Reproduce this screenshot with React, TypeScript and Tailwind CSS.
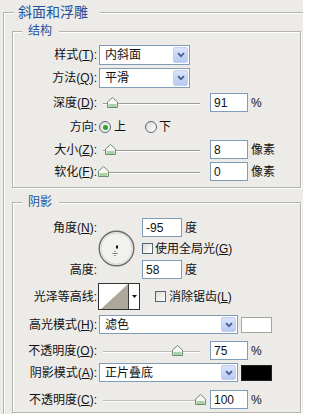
import React from "react";

// 标签列宽度：标签右对齐，冒号落在 x≈97
const LABEL = "w-[84px] shrink-0 text-right leading-none whitespace-nowrap";
const FIELD = "border border-[#7f9db9] bg-white";

function Chevron() {
  return (
    <svg width="8" height="6" viewBox="0 0 8 6">
      <path d="M1 1.2 L4 4.2 L7 1.2" fill="none" stroke="#4a5e8c" strokeWidth="1.8" />
    </svg>
  );
}

function Select({ w, text, btnH }: { w: string; text: string; btnH: string }) {
  return (
    <div className={`ml-[2px] ${w} h-full ${FIELD} flex items-center pl-[5px] leading-none`}>
      <span>{text}</span>
      <span
        className={`ml-auto mr-[1px] w-[15px] ${btnH} flex items-center justify-center rounded-[2px] bg-gradient-to-b from-[#dbe4fb] to-[#b9c9f3] border border-[#c3cff0]`}
      >
        <Chevron />
      </span>
    </div>
  );
}

function Thumb() {
  return (
    <svg width="11" height="11" viewBox="0 0 11 11">
      <path d="M0.5 5 L5.5 0.5 L10.5 5 V10.5 H0.5 Z" fill="#f6f7f2" stroke="#6f8a72" />
      <rect x="1.5" y="7" width="8" height="3" fill="#a9d3a6" />
    </svg>
  );
}

// 滑块：轨道 x 103..200，frac 为拇指位置比例
function Slider({ frac, light }: { frac: number; light?: boolean }) {
  return (
    <div className="ml-[2px] w-[106px] h-full relative">
      <div
        className={`absolute left-[4px] w-[97px] top-[10px] h-[2px] border-t ${
          light ? "border-[#bdbdb5]" : "border-[#9c9c96]"
        } border-b border-b-white`}
      />
      <div className="absolute top-[4px]" style={{ left: 4 + frac * 97 - 5.5 }}>
        <Thumb />
      </div>
    </div>
  );
}

function Num({ v, w = "w-[38px]", ml = "ml-[5px]" }: { v: string; w?: string; ml?: string }) {
  return (
    <div className={`${ml} ${w} h-full ${FIELD} pl-[3px] flex items-center leading-none`}>{v}</div>
  );
}

function Check({ ml = "" }: { ml?: string }) {
  return (
    <span
      className={`${ml} block w-[11px] h-[11px] shrink-0 border border-[#4f6478] bg-gradient-to-br from-[#dcdcd5] to-white`}
    />
  );
}

function Radio({ on, ml }: { on?: boolean; ml: string }) {
  return (
    <span
      className={`${ml} w-[12px] h-[12px] shrink-0 rounded-full border border-[#5a6674] bg-gradient-to-br from-[#d9d9d2] to-white flex items-center justify-center`}
    >
      {on && <span className="w-[5px] h-[5px] rounded-full bg-[#34a03a]" />}
    </span>
  );
}

function Group({ title, mt, children }: { title: string; mt: string; children: React.ReactNode }) {
  return (
    <fieldset
      className={`${mt} w-[289px] border border-[#b4b4ac] shadow-[1px_1px_0_#fff,inset_1px_1px_0_#fff]`}
    >
      <legend className="ml-[9px] pl-[6px] pr-[7px] leading-[16px] text-[12px] text-[#21539e] bg-[#ecebe8]">
        {title}
      </legend>
      {children}
    </fieldset>
  );
}

export default function App() {
  return (
    <div className="w-[303px] h-[414px] overflow-hidden bg-[#ecebe8] text-[12px] text-[#111] font-['Liberation_Sans','Noto_Sans_CJK_SC',sans-serif]">
      <fieldset className="ml-[3px] mt-[4px] w-[330px] h-[440px] border border-[#b4b4ac] shadow-[1px_1px_0_#fff,inset_1px_1px_0_#fff]">
        <legend className="ml-[10px] pl-[4px] pr-[12px] leading-[16px] text-[14px] text-[#21539e] bg-[#ecebe8]">
          斜面和浮雕
        </legend>
        <div className="pl-[8px] pt-[3px]">
          {/* 结构 */}
          <Group title="结构" mt="mt-0">
            <div className="flex flex-col pb-[6px]">
              <div className="flex items-center h-[20px] mt-[6px]">
                <span className={LABEL}>
                  样式(<u>T</u>):
                </span>
                <Select w="w-[91px]" text="内斜面" btnH="h-[16px]" />
              </div>
              <div className="flex items-center h-[20px] mt-[3px]">
                <span className={LABEL}>
                  方法(<u>Q</u>):
                </span>
                <Select w="w-[91px]" text="平滑" btnH="h-[16px]" />
              </div>
              <div className="flex items-center h-[19px] mt-[5px]">
                <span className={LABEL}>
                  深度(<u>D</u>):
                </span>
                <Slider frac={0.093} />
                <Num v="91" />
                <span className="ml-[3px] leading-none">%</span>
              </div>
              <div className="flex items-center h-[20px] mt-[5px]">
                <span className={LABEL}>方向:</span>
                <Radio on ml="ml-[2px]" />
                <span className="ml-[3px] leading-none">上</span>
                <Radio ml="ml-[19px]" />
                <span className="ml-[2px] leading-none">下</span>
              </div>
              <div className="flex items-center h-[19px] mt-[3px]">
                <span className={LABEL}>
                  大小(<u>Z</u>):
                </span>
                <Slider frac={0.08} />
                <Num v="8" />
                <span className="ml-[3px] leading-none">像素</span>
              </div>
              <div className="flex items-center h-[19px] mt-[3px]">
                <span className={LABEL}>
                  软化(<u>F</u>):
                </span>
                <Slider frac={0.01} />
                <Num v="0" />
                <span className="ml-[3px] leading-none">像素</span>
              </div>
            </div>
          </Group>

          {/* 阴影 */}
          <Group title="阴影" mt="mt-[6px]">
            <div className="flex flex-col pb-[3px]">
              <div className="flex mt-[8px]">
                <div className="w-[84px] shrink-0 h-[61px] flex flex-col justify-between text-right leading-none">
                  <div className="h-[19px] flex items-center justify-end">
                    角度(<u>N</u>):
                  </div>
                  <div className="h-[19px] flex items-center justify-end">高度:</div>
                </div>
                <svg className="ml-[1px] self-center" width="37" height="37" viewBox="0 0 37 37">
                  <circle cx="18.5" cy="18.5" r="17.3" fill="#f1f1ee" stroke="#6c6c6c" strokeWidth="1.4" />
                  <circle cx="18.5" cy="18.5" r="15.6" fill="none" stroke="#d4d4cf" strokeWidth="1" />
                  <rect x="18" y="15.5" width="2" height="3" fill="#111" />
                  <path d="M17 21 V26 M14.5 23.5 H19.5" stroke="#444" strokeWidth="1" strokeDasharray="1 1" />
                </svg>
                <div className="ml-[7px] flex flex-col">
                  <div className="flex items-center h-[19px]">
                    <Num v="-95" w="w-[40px]" ml="ml-0" />
                    <span className="ml-[3px] leading-none">度</span>
                  </div>
                  <div className="flex items-center h-[23px]">
                    <Check />
                    <span className="ml-[2px] leading-none">
                      使用全局光(<u>G</u>)
                    </span>
                  </div>
                  <div className="flex items-center h-[19px]">
                    <Num v="58" w="w-[40px]" ml="ml-0" />
                    <span className="ml-[3px] leading-none">度</span>
                  </div>
                </div>
              </div>

              <div className="flex items-center h-[27px] mt-[4px]">
                <span className={LABEL}>光泽等高线:</span>
                <div className="ml-[1px] w-[42px] h-[27px] border border-[#303030] bg-white flex">
                  <svg width="29" height="25" viewBox="0 0 29 25">
                    <polygon points="2,25 29,0 29,25" fill="#aca99c" />
                  </svg>
                  <div className="flex-1 border-l border-[#3a3a3a] flex items-center justify-center">
                    <svg width="5" height="3" viewBox="0 0 5 3">
                      <polygon points="0,0 5,0 2.5,3" fill="#111" />
                    </svg>
                  </div>
                </div>
                <Check ml="ml-[15px]" />
                <span className="ml-[3px] leading-none">
                  消除锯齿(<u>L</u>)
                </span>
              </div>

              <div className="flex items-center h-[19px] mt-[5px]">
                <span className={LABEL}>
                  高光模式(<u>H</u>):
                </span>
                <Select w="w-[139px]" text="滤色" btnH="h-[15px]" />
                <span className="ml-[3px] w-[31px] h-[16px] bg-white border border-[#a5a5a0]" />
              </div>
              <div className="flex items-center h-[19px] mt-[7px]">
                <span className={LABEL}>
                  不透明度(<u>O</u>):
                </span>
                <Slider frac={0.77} light />
                <Num v="75" />
                <span className="ml-[3px] leading-none">%</span>
              </div>
              <div className="flex items-center h-[19px] mt-[3px]">
                <span className={LABEL}>
                  阴影模式(<u>A</u>):
                </span>
                <Select w="w-[139px]" text="正片叠底" btnH="h-[15px]" />
                <span className="ml-[3px] w-[31px] h-[16px] bg-black border border-[#222]" />
              </div>
              <div className="flex items-center h-[19px] mt-[8px]">
                <span className={LABEL}>
                  不透明度(<u>C</u>):
                </span>
                <Slider frac={1} light />
                <Num v="100" />
                <span className="ml-[3px] leading-none">%</span>
              </div>
            </div>
          </Group>
        </div>
      </fieldset>
    </div>
  );
}
